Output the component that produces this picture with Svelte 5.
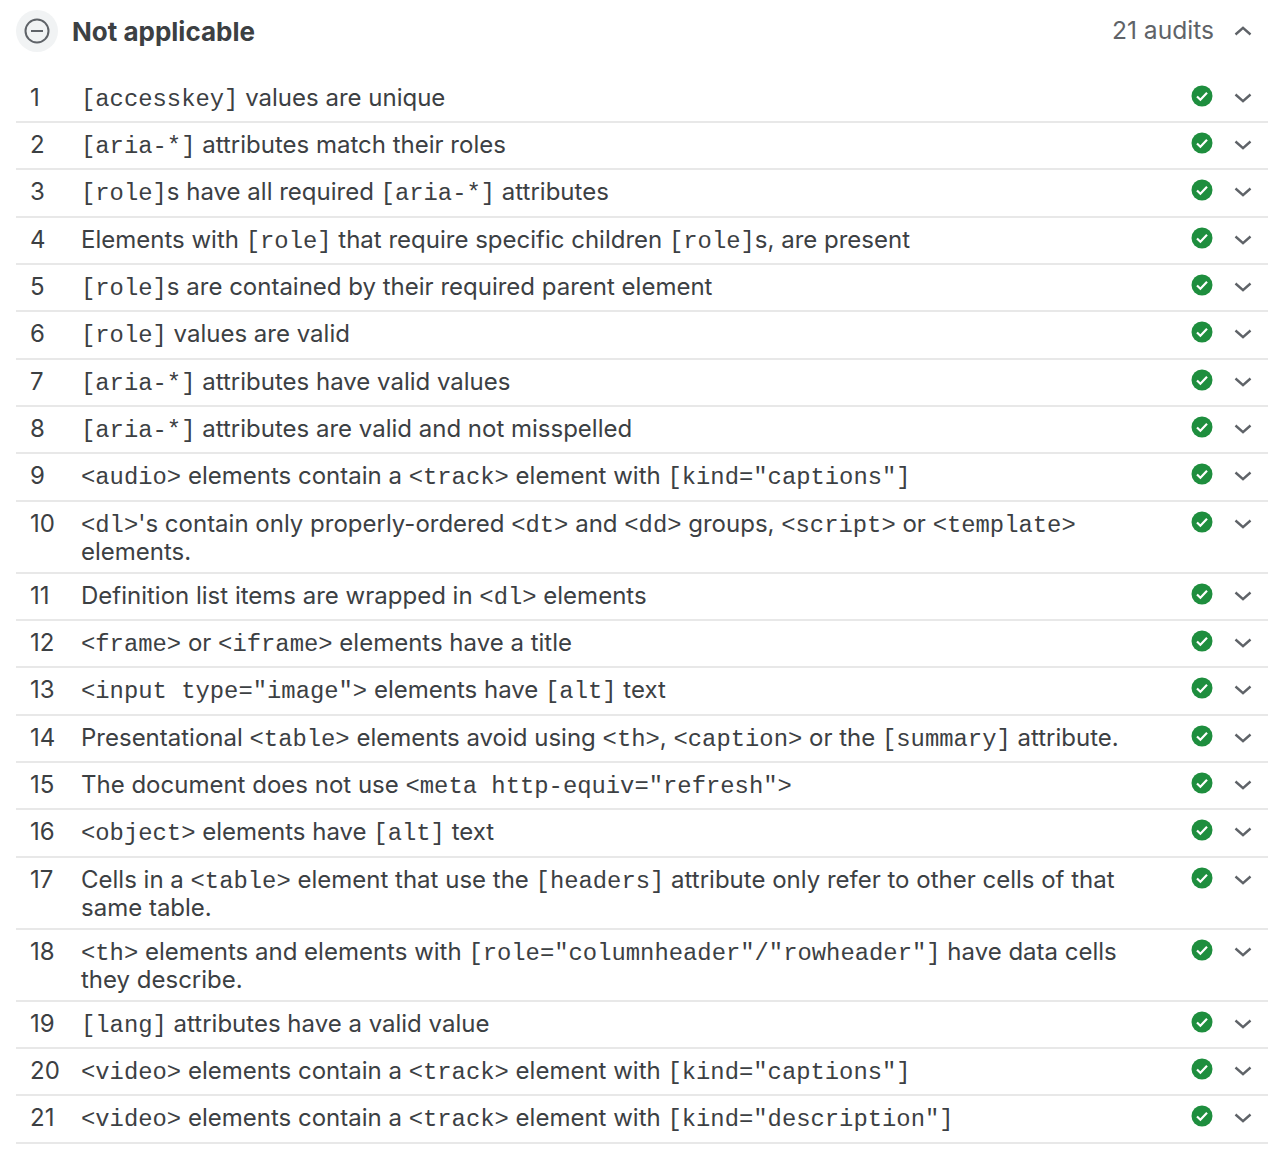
<script>
const rows = [
 [['c','[accesskey]'],' values are unique'],
 [['c','[aria-*]'],' attributes match their roles'],
 [['c','[role]'],'s have all required ',['c','[aria-*]'],' attributes'],
 ['Elements with ',['c','[role]'],' that require specific children ',['c','[role]'],'s, are present'],
 [['c','[role]'],'s are contained by their required parent element'],
 [['c','[role]'],' values are valid'],
 [['c','[aria-*]'],' attributes have valid values'],
 [['c','[aria-*]'],' attributes are valid and not misspelled'],
 [['c','<audio>'],' elements contain a ',['c','<track>'],' element with ',['c','[kind="captions"]']],
 [['c','<dl>'],"'s contain only properly-ordered ",['c','<dt>'],' and ',['c','<dd>'],' groups, ',['c','<script>'],' or ',['c','<template>'],' elements.'],
 ['Definition list items are wrapped in ',['c','<dl>'],' elements'],
 [['c','<frame>'],' or ',['c','<iframe>'],' elements have a title'],
 [['c','<input type="image">'],' elements have ',['c','[alt]'],' text'],
 ['Presentational ',['c','<table>'],' elements avoid using ',['c','<th>'],', ',['c','<caption>'],' or the ',['c','[summary]'],' attribute.'],
 ['The document does not use ',['c','<meta http-equiv="refresh">']],
 [['c','<object>'],' elements have ',['c','[alt]'],' text'],
 ['Cells in a ',['c','<table>'],' element that use the ',['c','[headers]'],' attribute only refer to other cells of that same table.'],
 [['c','<th>'],' elements and elements with ',['c','[role="columnheader"/"rowheader"]'],' have data cells they describe.'],
 [['c','[lang]'],' attributes have a valid value'],
 [['c','<video>'],' elements contain a ',['c','<track>'],' element with ',['c','[kind="captions"]']],
 [['c','<video>'],' elements contain a ',['c','<track>'],' element with ',['c','[kind="description"]']],
];
</script>

<div class="page">
  <div class="head">
    <span class="badge">
      <svg width="26" height="26" viewBox="0 0 26 26" fill="none" stroke="#5f6368" stroke-width="2"><circle cx="13" cy="13" r="11.5"/><path d="M7 13h12"/></svg>
    </span>
    <span class="title">Not applicable</span>
    <span class="count">21 audits</span>
    <svg class="chev" width="18" height="10" viewBox="0 0 18 10" fill="none" stroke="#5f6368" stroke-width="2.4"><path d="M1.5 8.5L9 1.8l7.5 6.7"/></svg>
  </div>
  <ol class="list">
    {#each rows as row, i}
      <li class="row">
        <span class="num">{i + 1}</span>
        <span class="text">{#each row as p}{#if typeof p === 'string'}{p}{:else}<code>{p[1]}</code>{/if}{/each}</span>
        <svg class="ok" width="22" height="22" viewBox="0 0 22 22"><circle cx="11" cy="11" r="10.5" fill="#1e8e3e"/><path d="M6 11.5l3.4 3.2 6.6-7" fill="none" stroke="#fff" stroke-width="2.2"/></svg>
        <svg class="chev" width="18" height="10" viewBox="0 0 18 10" fill="none" stroke="#5f6368" stroke-width="2.4"><path d="M1.5 1.5L9 8.2l7.5-6.7"/></svg>
      </li>
    {/each}
  </ol>
</div>

<style>
:global(body){margin:0;background:#fff;}
.page{width:1270px;font-family:Inter,"Liberation Sans",sans-serif;color:#3c4043;font-size:24px;}
.head{display:flex;align-items:center;height:62px;padding:0 25px 0 16px;}
.badge{width:42px;height:42px;border-radius:50%;background:#f1f3f4;display:flex;align-items:center;justify-content:center;margin-right:14px;}
.title{font-weight:700;font-size:26px;flex:1;}
.count{margin:-3px 20px 0 0;color:#5f6368;font-size:24.6px;}
.head .chev{margin-right:-7px;}
.list{list-style:none;margin:13.67px 0 0 16px;padding:0;width:1252px;}
.row{display:flex;align-items:flex-start;box-sizing:border-box;min-height:47.33px;padding:8px 16px 6px 14px;border-bottom:2px solid #e8e8e8;line-height:28px;}
.num{width:51px;flex:none;}
.text{flex:1;max-width:1060px;}
code{font-family:"Liberation Mono",monospace;font-size:23.85px;line-height:1;}
.ok{margin:1px 0 0 auto;flex:none;}
.row .chev{margin:9px 0 0 21px;flex:none;}
</style>
